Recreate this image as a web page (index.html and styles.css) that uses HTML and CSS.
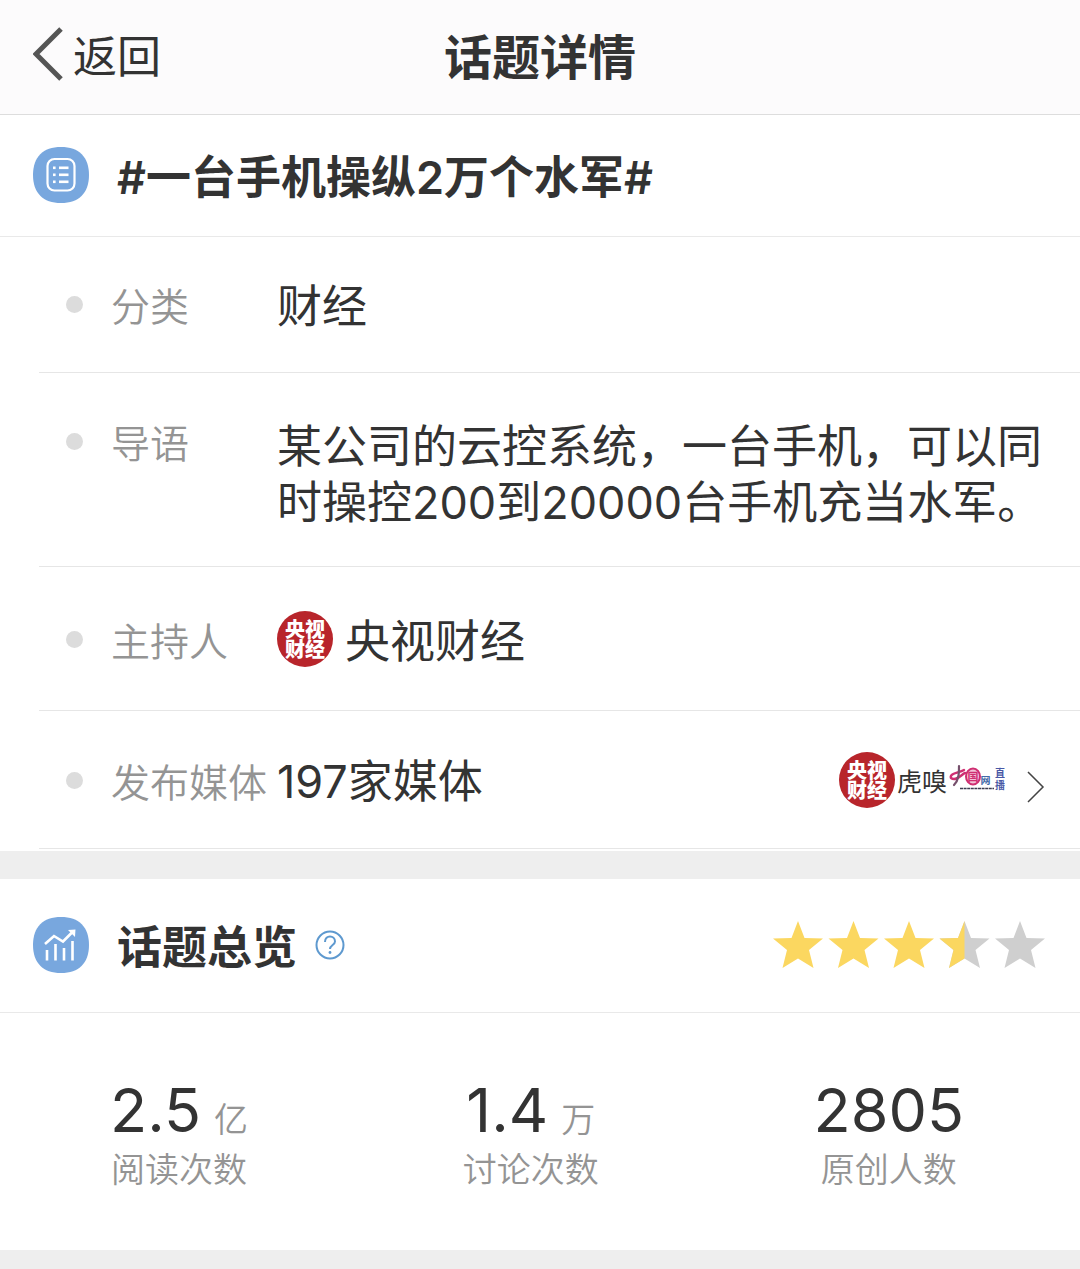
FILE: index.html
```html
<!DOCTYPE html>
<html lang="zh-CN">
<head>
  <meta charset="UTF-8">
  <meta name="viewport" content="width=device-width, initial-scale=1">
  <title>话题详情</title>
  <link rel="stylesheet" href="styles.css">
</head>
<body>

<header class="navbar">
  <button class="back" type="button">
    <svg class="back-icon" viewBox="0 0 30 54" aria-hidden="true">
      <path d="M28 2 L3 27 L28 52" fill="none" stroke="#555" stroke-width="5"/>
    </svg>
    返回
  </button>
  <h1 class="navbar-title">话题详情</h1>
</header>

<main>
  <section class="card">
    <div class="card-head topic-head">
      <svg class="head-icon" viewBox="0 0 56 56" aria-hidden="true">
        <path d="M28 0 C46 0 56 10 56 28 S46 56 28 56 S0 46 0 28 S10 0 28 0Z" fill="#78a7de"/>
        <rect x="14.5" y="12" width="27" height="31.5" rx="7" fill="none" stroke="#fff" stroke-width="2.2"/>
        <g fill="#fff">
          <rect x="20" y="19.5" width="2.6" height="2.6"/>
          <rect x="20" y="26.5" width="2.6" height="2.6"/>
          <rect x="20" y="33.5" width="2.6" height="2.6"/>
          <rect x="26" y="19.5" width="9.5" height="2.6"/>
          <rect x="26" y="26.5" width="9.5" height="2.6"/>
          <rect x="26" y="33.5" width="9.5" height="2.6"/>
        </g>
      </svg>
      <h2 class="card-title">#一台手机操纵2万个水军#</h2>
    </div>

    <dl class="info">
      <div class="info-row">
        <dt class="info-label">分类</dt>
        <dd class="info-value">财经</dd>
      </div>
      <div class="info-row info-row-text">
        <dt class="info-label">导语</dt>
        <dd class="info-value mixed">某公司的云控系统，一台手机，可以同时操控200到20000台手机充当水军。</dd>
      </div>
      <div class="info-row info-row-host">
        <dt class="info-label">主持人</dt>
        <dd class="info-value host">
          <span class="avatar">央视<br>财经</span>
          央视财经
        </dd>
      </div>
      <div class="info-row info-row-media">
        <dt class="info-label">发布媒体</dt>
        <dd class="info-value media">
          <span class="mixed">197家媒体</span>
          <a class="media-list" href="#" aria-label="全部媒体">
            <span class="avatar">央视<br>财经</span>
            <span class="huxiu">虎嗅</span>
            <svg class="china-logo" viewBox="0 0 56 32" aria-hidden="true">
              <g fill="none" stroke="#cf2f72" stroke-linecap="round">
                <path d="M2 14 C0 9 10 9 15 6 M2 14 C7 18 13 10 16 9" stroke-width="2.4"/>
                <path d="M10 2 C10 9 10 16 5 21" stroke="#76506c" stroke-width="2.2"/>
                <ellipse cx="24" cy="12.5" rx="7" ry="8" stroke-width="2" fill="#f3c3d8"/>
              </g>
              <text x="18.5" y="16.500" font-size="11" font-weight="700" fill="#cf2f72">国</text>
              <text x="31.5" y="20" font-size="10" font-weight="700" fill="#426aa8">网</text>
              <path d="M11 24.500 H45" stroke="#3c3c50" stroke-width="1.500" stroke-dasharray="3 .6"/>
              <text x="46" y="13" font-size="10" font-weight="700" fill="#4857a5">直</text>
              <text x="46" y="25" font-size="10" font-weight="700" fill="#4857a5">播</text>
            </svg>
            <svg class="arrow-icon" viewBox="0 0 18 42" aria-hidden="true">
              <path d="M1 6 L16 21 L1 36" fill="none" stroke="#444" stroke-width="1.500"/>
            </svg>
          </a>
        </dd>
      </div>
    </dl>
  </section>

  <section class="card">
    <div class="card-head overview-head">
      <svg class="head-icon" viewBox="0 0 56 56" aria-hidden="true">
        <path d="M28 0 C46 0 56 10 56 28 S46 56 28 56 S0 46 0 28 S10 0 28 0Z" fill="#78a7de"/>
        <g fill="none" stroke="#fff" stroke-width="2.6">
          <path d="M12 27 L21 19 L30 24.500 L40 14.500"/>
          <path d="M14 33 V43.500 M22.500 27 V43.500 M31 31 V43.500 M39.500 24 V43.500"/>
        </g>
        <path d="M35 13 L42.500 12.500 L42 20Z" fill="#fff"/>
      </svg>
      <h2 class="card-title">话题总览</h2>
      <button class="help" type="button" aria-label="说明">
        <svg viewBox="0 0 30 30" aria-hidden="true">
          <circle cx="15" cy="15" r="13.500" fill="none" stroke="#5e99cf" stroke-width="2"/>
          <path d="M10 12 C10 4.500 20 5 20 11.500 C20 15 15 15 15 19" fill="none" stroke="#5e99cf" stroke-width="2"/>
          <circle cx="15" cy="22.500" r="1.400" fill="#5e99cf"/>
        </svg>
      </button>
      <svg class="stars" viewBox="0 0 272 48" role="img" aria-label="3.5 星">
        <defs>
          <path id="star" d="M25 0 L31.500 17 L50 17.500 L36 29 L40.500 47 L25 37.500 L9.500 47 L14 29 L0 17.500 L18.500 17Z"/>
          <path id="half" d="M25 0 V37.500 L9.500 47 L14 29 L0 17.500 L18.500 17Z"/>
        </defs>
        <use href="#star" x="0" fill="#fbd760"/>
        <use href="#star" x="55.500" fill="#fbd760"/>
        <use href="#star" x="111" fill="#fbd760"/>
        <use href="#star" x="166.500" fill="#cfcfcf"/>
        <use href="#half" x="166.500" fill="#fbd760"/>
        <use href="#star" x="222" fill="#cfcfcf"/>
      </svg>
    </div>

    <ul class="stats">
      <li class="stat">
        <div class="stat-number">2.5<span class="stat-unit">亿</span></div>
        <div class="stat-label">阅读次数</div>
      </li>
      <li class="stat">
        <div class="stat-number">1.4<span class="stat-unit">万</span></div>
        <div class="stat-label">讨论次数</div>
      </li>
      <li class="stat">
        <div class="stat-number">2805</div>
        <div class="stat-label">原创人数</div>
      </li>
    </ul>
  </section>
</main>

</body>
</html>
```
FILE: styles.css
```css
* {
  box-sizing: border-box;
}
body {
  margin: 0;
  background: #eee;
  color: #333;
  font-family: "Noto Sans CJK SC", sans-serif;
  font-size: 45px;
  line-height: 56px;
}
h1, h2, dl, dd, ul {
  margin: 0;
  padding: 0;
}
button {
  padding: 0;
  border: none;
  background: none;
  color: inherit;
  font: inherit;
  cursor: pointer;
}
svg {
  display: block;
  flex: none;
}

/* 顶部导航 */
.navbar {
  display: grid;
  grid-template-columns: 1fr auto 1fr;
  align-items: center;
  padding: 26px 33px 32px;
  background: #fcfbfc;
  border-bottom: 1px solid #ddd;
}
.back {
  display: flex;
  align-items: center;
  gap: 10px;
  font-size: 44px;
}
.back-icon {
  width: 30px;
  height: 54px;
}
.navbar-title {
  font-size: 48px;
  font-weight: 600;
}

/* 卡片 */
.card {
  margin-bottom: 28px;
  background: #fff;
}
.card:last-child {
  margin-bottom: 0;
}
.card-head {
  display: flex;
  align-items: center;
  padding: 32px 35px 33px 33px;
  border-bottom: 1px solid #e9e9e9;
}
.overview-head {
  padding: 38px 35px 39px 33px;
}
.head-icon {
  width: 56px;
  height: 56px;
  margin-right: 28px;
}
.card-title {
  padding-top: 6px;
  font-family: Inter, "Noto Sans CJK SC", sans-serif;
  font-size: 45px;
  font-weight: 600;
  line-height: 50px;
}
.help {
  margin-left: 18px;
}
.help svg {
  width: 30px;
  height: 30px;
}
.stars {
  width: 272px;
  height: 48px;
  margin-left: auto;
}

/* 话题信息 */
.info {
  padding: 0 0 2px 39px;
}
.info-row {
  display: flex;
  align-items: center;
  padding: 39px 35px 40px 27px;
  border-bottom: 1px solid #e6e6e6;
}
.info-row-text {
  align-items: flex-start;
  padding-top: 42px;
  padding-bottom: 35px;
}
.info-row-host {
  padding-top: 44px;
  padding-bottom: 43px;
}
.info-row-media {
  padding-top: 39px;
  padding-bottom: 38px;
}
.info-label {
  display: flex;
  align-items: center;
  flex: none;
  width: 211px;
  color: #949494;
  font-size: 39px;
  font-weight: 350;
  line-height: 52px;
}
.info-label::before {
  content: "";
  width: 17px;
  height: 17px;
  margin-right: 28px;
  border-radius: 50%;
  background: #dcdcdc;
}
.info-value {
  flex: 1;
}
/* 中文与数字混排 */
.mixed {
  padding-top: 4px;
  font-family: Inter, "Noto Sans CJK SC", sans-serif;
}
.host {
  display: flex;
  align-items: center;
  gap: 12px;
}
.media {
  display: flex;
  align-items: center;
  justify-content: space-between;
}
.media-list {
  display: flex;
  align-items: center;
  gap: 2px;
  color: inherit;
  text-decoration: none;
}
.avatar {
  display: flex;
  flex-direction: column;
  align-items: center;
  justify-content: center;
  width: 56px;
  height: 56px;
  border-radius: 50%;
  background: #b8252b;
  color: #fff;
  font-size: 20px;
  font-weight: 900;
  line-height: 20px;
}
.huxiu {
  font-size: 25px;
}
.china-logo {
  width: 56px;
  height: 32px;
}
.arrow-icon {
  align-self: flex-end;
  width: 18px;
  height: 42px;
  margin-left: 20px;
}

/* 数据总览 */
.stats {
  display: flex;
  justify-content: space-between;
  padding: 63px 116px 58px 110px;
  list-style: none;
}
.stat-number {
  display: flex;
  align-items: baseline;
  justify-content: center;
  gap: 13px;
  font-family: Inter, "Noto Sans CJK SC", sans-serif;
  font-size: 61px;
  line-height: 68px;
}
.stat-unit {
  color: #949494;
  font-size: 34px;
  font-weight: 350;
  line-height: 1;
}
.stat-label {
  color: #949494;
  font-size: 34px;
  font-weight: 350;
  line-height: 48px;
  text-align: center;
}
```
